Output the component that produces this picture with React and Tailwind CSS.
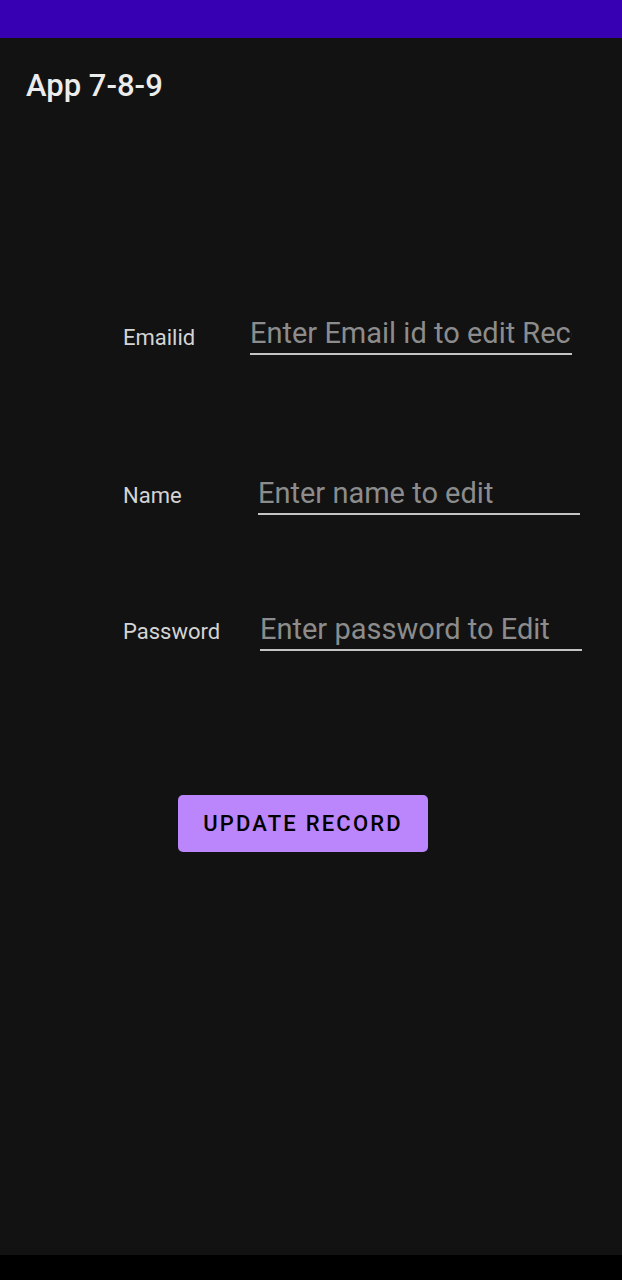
export default function App() {
  const rows = [
    { label: 'Emailid', placeholder: 'Enter Email id to edit Record', mt: 'mt-[186px]', labelW: 'w-[127px]', shift: 'mt-[7px]' },
    { label: 'Name', placeholder: 'Enter name to edit', mt: 'mt-[117px]', labelW: 'w-[135px]', shift: 'mt-[4px]' },
    { label: 'Password', placeholder: 'Enter password to Edit', mt: 'mt-[93px]', labelW: 'w-[137px]', shift: 'mt-[3px]' },
  ];

  return (
    <div className="w-[622px] h-[1280px] flex flex-col bg-[#121212] font-['Roboto',sans-serif] overflow-hidden">
      {/* status bar */}
      <div className="h-[38px] bg-[#3700b3] shrink-0" />

      {/* action bar */}
      <div className="h-[88px] shrink-0 flex items-center pl-[26px] pt-[6px]">
        <span className="text-[31px] font-medium text-[#ececec] leading-none">App 7-8-9</span>
      </div>

      {/* form */}
      <div className="flex-1 flex flex-col">
        {rows.map((r) => (
          <div key={r.label} className={`${r.mt} flex items-center pl-[123px]`}>
            <span className={`${r.labelW} shrink-0 ${r.shift} text-[22px] text-[#d4d4d4]`}>{r.label}</span>
            <input
              className="w-[322px] h-[43px] bg-transparent border-b-2 border-[#c4c4c4] outline-none text-[29px] text-white placeholder:text-[#8c8c8c] pt-[2px]"
              placeholder={r.placeholder}
            />
          </div>
        ))}

        <div className="mt-[144px] pl-[178px]">
          <button className="w-[250px] h-[57px] rounded-[5px] bg-[#bb86fc] text-black text-[22px] font-medium tracking-[2.2px]">
            UPDATE RECORD
          </button>
        </div>
      </div>

      {/* nav bar */}
      <div className="h-[25px] bg-black shrink-0" />
    </div>
  );
}
